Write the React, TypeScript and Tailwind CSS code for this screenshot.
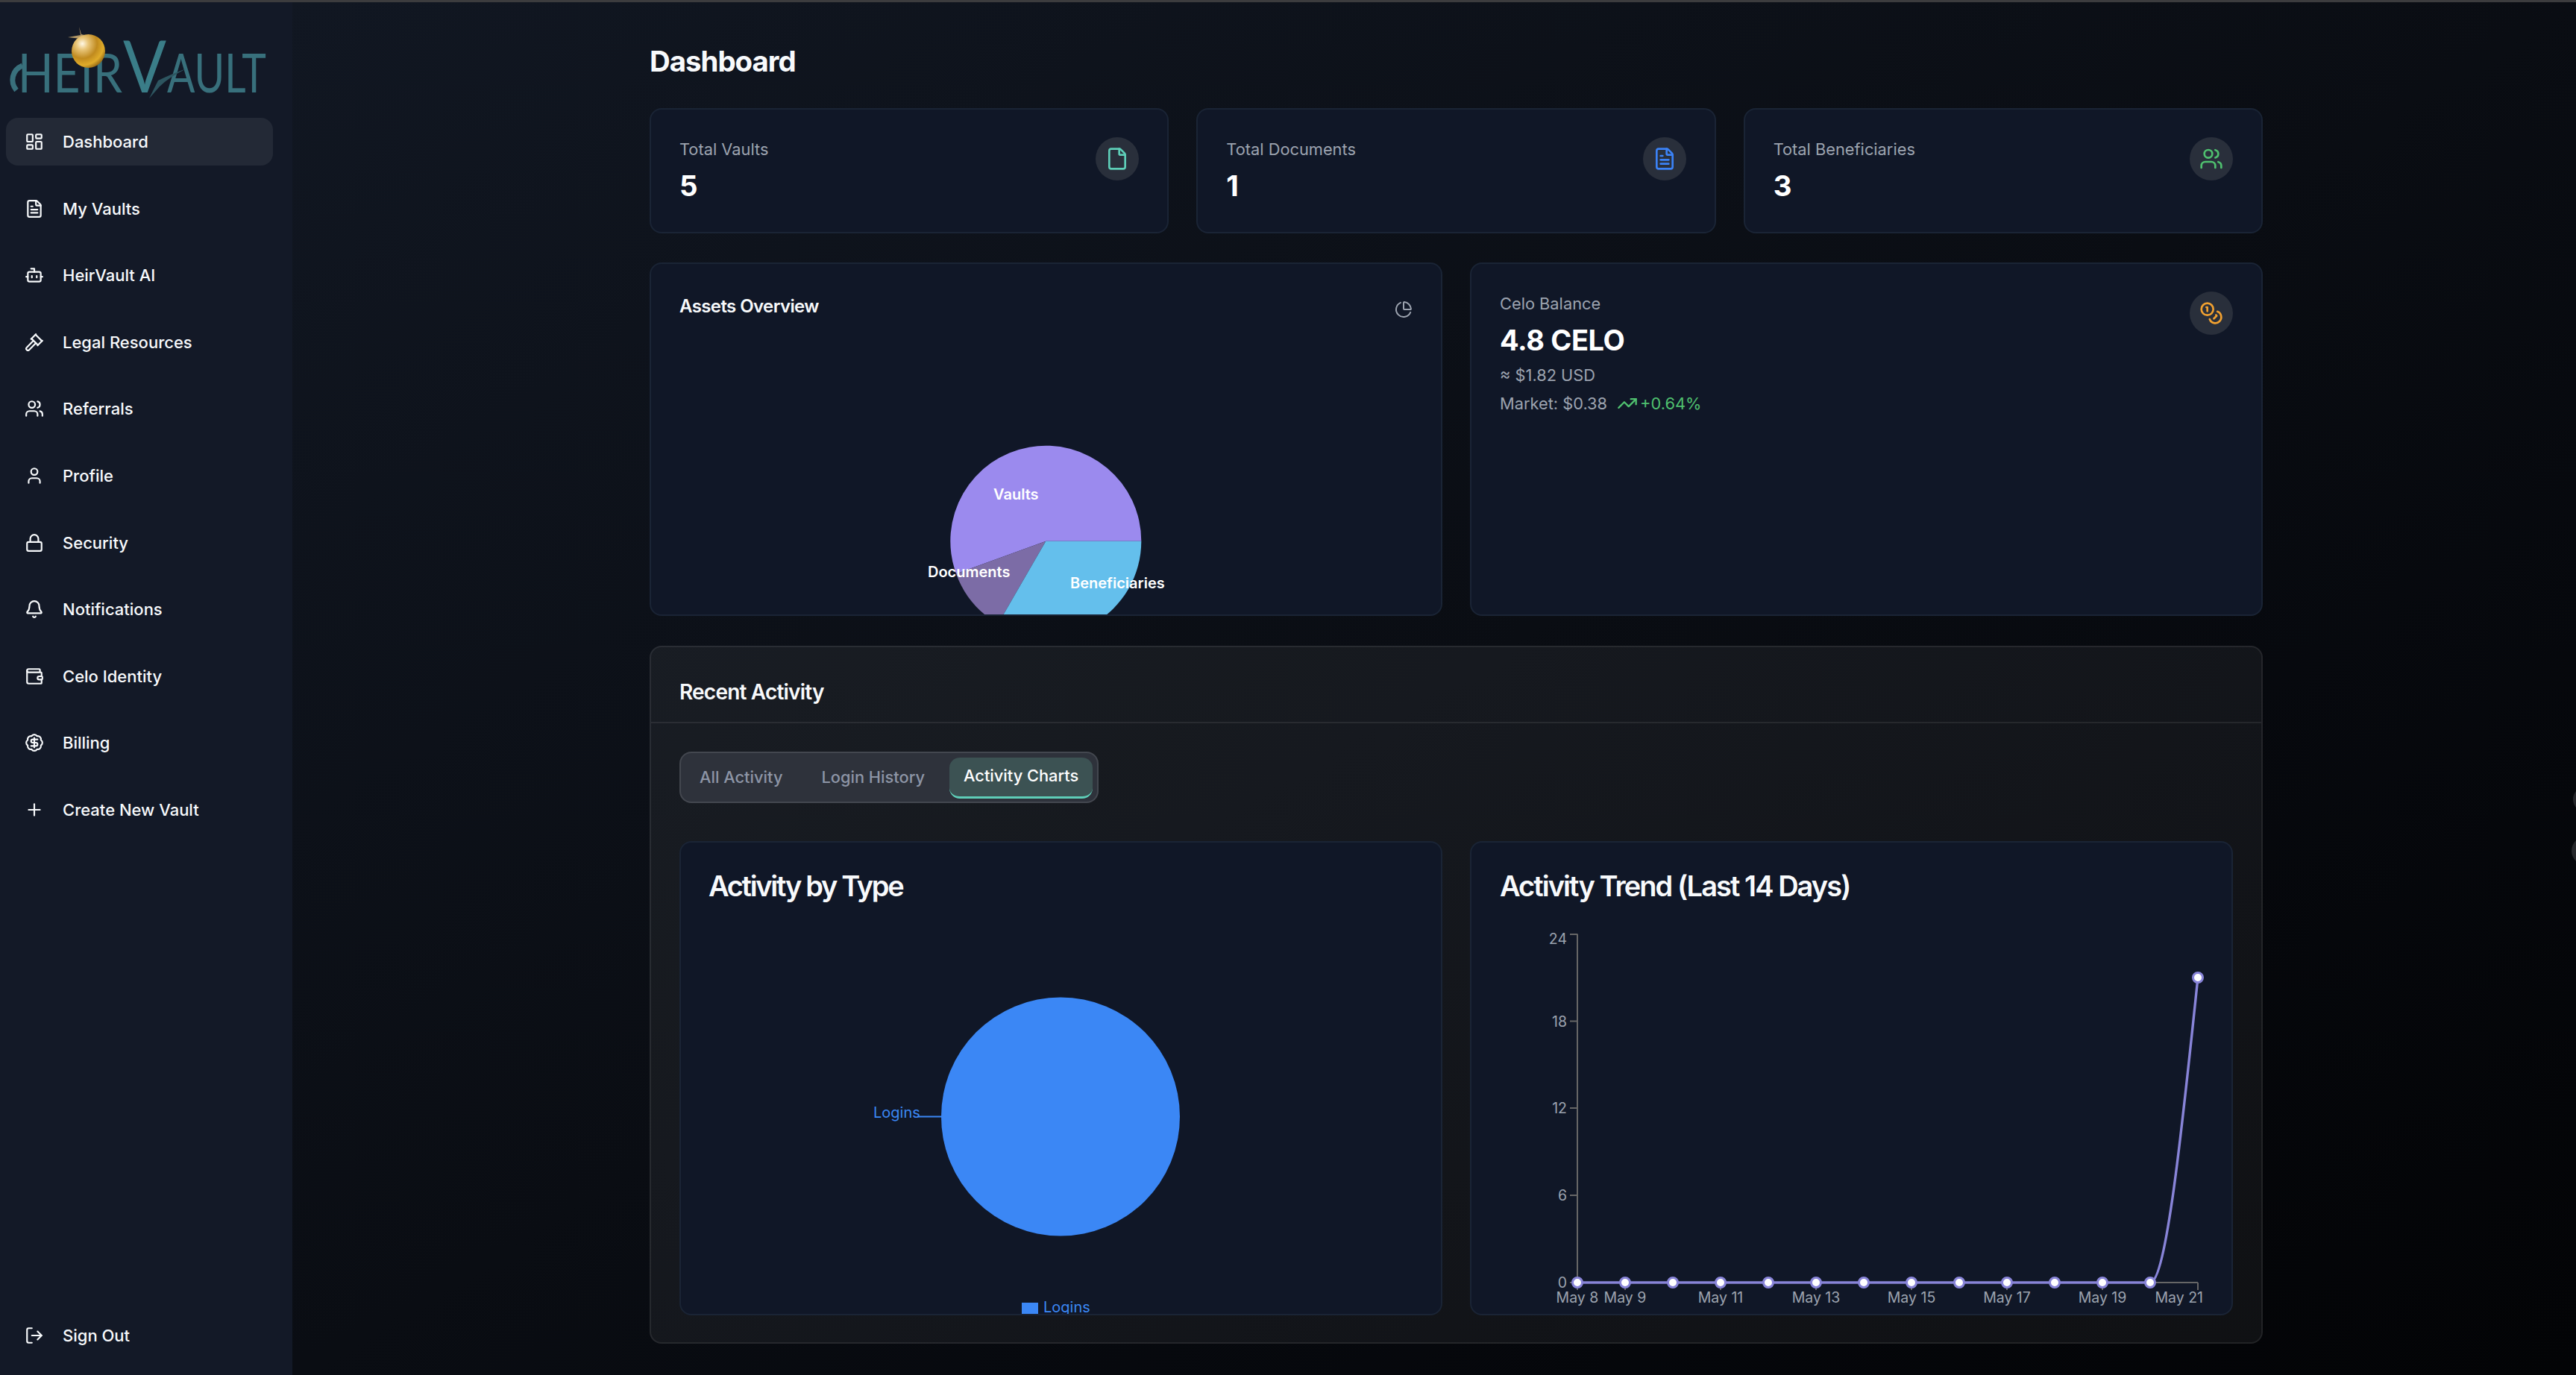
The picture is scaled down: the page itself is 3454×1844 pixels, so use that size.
import React from "react";
import {
  LayoutDashboard, FileText, Bot, Gavel, Users, User, Lock, Bell, Wallet, BadgeDollarSign, Plus, LogOut,
  File, Coins, PieChart, TrendingUp,
} from "lucide-react";

const nav = [
  { label: "Dashboard", Icon: LayoutDashboard, active: true },
  { label: "My Vaults", Icon: FileText },
  { label: "HeirVault AI", Icon: Bot },
  { label: "Legal Resources", Icon: Gavel },
  { label: "Referrals", Icon: Users },
  { label: "Profile", Icon: User },
  { label: "Security", Icon: Lock },
  { label: "Notifications", Icon: Bell },
  { label: "Celo Identity", Icon: Wallet },
  { label: "Billing", Icon: BadgeDollarSign },
  { label: "Create New Vault", Icon: Plus },
];

function Logo() {
  return (
    <svg width="380" height="155" viewBox="0 3 380 155" className="block shrink-0" role="img" aria-label="HeirVault">
      <defs>
        <radialGradient id="gold" cx="0.32" cy="0.28" r="0.8">
          <stop offset="0" stopColor="#fff8e6" />
          <stop offset="0.22" stopColor="#e9c67a" />
          <stop offset="0.55" stopColor="#c08a1e" />
          <stop offset="0.8" stopColor="#e0ac2a" />
          <stop offset="1" stopColor="#8a5e12" />
        </radialGradient>
      </defs>
      <path d="M30 88 C16 94 13 110 22 121" fill="none" stroke="#39707c" strokeWidth="7" />
      <text x="24" y="124" fontFamily="Lato, 'Liberation Sans', sans-serif" fontSize="72" fill="#38707c" textLength="140" lengthAdjust="spacingAndGlyphs">HEIR</text>
      <text x="165" y="124" fontFamily="Lato, 'Liberation Sans', sans-serif" fontSize="96" fill="#3a7d88" textLength="58" lengthAdjust="spacingAndGlyphs">V</text>
      <text x="224" y="124" fontFamily="Lato, 'Liberation Sans', sans-serif" fontSize="72" fill="#38707c" textLength="133" lengthAdjust="spacingAndGlyphs">AULT</text>
      <path d="M200 132 L212 108 Q228 100 250 92 Q226 104 214 116 Z" fill="#2d5560" />
      <path d="M106 36 L108 47 L91 50 L109 52 L118 48 L109 46 Z" fill="#d9b777" opacity="0.8" />
      <circle cx="118.500" cy="68.500" r="22.500" fill="url(#gold)" />
    </svg>
  );
}

function Sidebar() {
  return (
    <aside className="w-[392px] shrink-0 h-full bg-[#131927] flex flex-col items-start pb-[21px]">
      <Logo />
      <nav className="flex flex-col gap-[25.600px] pl-[8px] w-[366px]">
        {nav.map(({ label, Icon, active }) => (
          <div
            key={label}
            className={`h-[64px] rounded-[16px] flex items-center pl-[25px] gap-[25px] text-[22px] leading-[32px] font-medium text-[#f8fafc] ${active ? "bg-[#232936]" : ""}`}
          >
            <Icon size={26} strokeWidth={2} className="shrink-0" />
            <span>{label}</span>
          </div>
        ))}
      </nav>
      <div className="mt-auto h-[64px] pl-[33px] gap-[25px] flex items-center text-[22px] font-medium text-[#f8fafc]">
        <LogOut size={26} className="shrink-0" />
        <span>Sign Out</span>
      </div>
    </aside>
  );
}

function IconCircle({ children }: { children: React.ReactNode }) {
  return (
    <div className="w-[58px] h-[58px] rounded-full bg-[#292f3b] flex items-center justify-center shrink-0">{children}</div>
  );
}

function Stat({ label, value, icon }: { label: string; value: string; icon: React.ReactNode }) {
  return (
    <div className="h-[168px] rounded-[16px] border-2 border-[#1a2435] bg-[#101727] py-[37px] px-[38px] flex justify-between items-start">
      <div>
        <div className="text-[21.800px] leading-[32px] text-[#9ca3af]">{label}</div>
        <div className="mt-[9px] text-[38.400px] leading-[48px] font-bold text-white">{value}</div>
      </div>
      {icon}
    </div>
  );
}

function AssetsPie() {
  const cx = 1402.3, cy = 725.7, r = 128;
  const pt = (deg: number) => {
    const a = (deg * Math.PI) / 180;
    return `${cx + r * Math.cos(a)} ${cy - r * Math.sin(a)}`;
  };
  return (
    <svg viewBox="873 470 1059 354" width="1059" height="354" className="block" fontFamily="Inter, sans-serif">
      <path d={`M${cx} ${cy} L${pt(0)} A${r} ${r} 0 1 0 ${pt(200)} Z`} fill="#9b8aee" />
      <path d={`M${cx} ${cy} L${pt(200)} A${r} ${r} 0 0 0 ${pt(240)} Z`} fill="#7c6ca6" />
      <path d={`M${cx} ${cy} L${pt(240)} A${r} ${r} 0 0 0 ${pt(360)} Z`} fill="#64bfec" />
      <g fill="#ffffff" fontSize="20" fontWeight="600">
        <text x="1332" y="670">Vaults</text>
        <text x="1244" y="774">Documents</text>
        <text x="1435" y="789">Beneficiaries</text>
      </g>
    </svg>
  );
}

function TypePie() {
  return (
    <svg viewBox="913 1220 1019 542" width="1019" height="542" className="block" fontFamily="Inter, sans-serif">
      <circle cx="1422" cy="1497.500" r="160" fill="#3b87f5" />
      <path d="M1230 1497.500 H1263" stroke="#3b87f5" strokeWidth="2" />
      <text x="1171" y="1499" fontSize="20" fill="#3b87f5">Logins</text>
      <rect x="1370" y="1747" width="22" height="18" fill="#3b87f5" />
      <text x="1399" y="1760" fontSize="20" fill="#3b87f5">Logins</text>
    </svg>
  );
}

function TrendChart() {
  const xs = Array.from({ length: 14 }, (_, i) => 2115 + i * 64);
  const yTicks = [[24, 1253], [18, 1369.5], [12, 1486], [6, 1603], [0, 1720]] as const;
  const xLabels = [[0, "May 8"], [1, "May 9"], [3, "May 11"], [5, "May 13"], [7, "May 15"], [9, "May 17"], [11, "May 19"]] as const;
  return (
    <svg viewBox="1973 1220 1019 542" width="1019" height="542" className="block" fontFamily="Inter, sans-serif">
      <g stroke="#666666" strokeWidth="2" fill="none">
        <path d="M2115 1252.500 V1720 H2947" />
        {yTicks.map(([v, y]) => <path key={v} d={`M2105 ${y} H2115`} />)}
        {xLabels.map(([i]) => <path key={i} d={`M${xs[i]} 1720 V1730`} />)}
        <path d="M2947 1720 V1730" />
      </g>
      <g fill="#9ca3af" fontSize="19.500">
        {yTicks.map(([v, y]) => <text key={v} x="2101" y={v === 24 ? y + 13 : y + 7} textAnchor="end">{v}</text>)}
        {xLabels.map(([i, l]) => <text key={l} x={xs[i]} y="1747" textAnchor="middle">{l}</text>)}
        <text x="2954" y="1747" textAnchor="end">May 21</text>
      </g>
      <path d="M2115 1720 H2883 C2904.330 1720 2925.670 1515.500 2947 1311" fill="none" stroke="#8884d8" strokeWidth="3.400" />
      {xs.map((x, i) => (
        <circle key={x} cx={x} cy={i === 13 ? 1311 : 1720} r="6.500" fill="#ffffff" stroke="#8884d8" strokeWidth="3" />
      ))}
    </svg>
  );
}

export default function App() {
  return (
    <div className="relative w-[3454px] h-[1844px] overflow-hidden flex flex-col bg-[#0b0e14] font-['Inter',sans-serif]">
      <div className="h-[3px] shrink-0 bg-[#3c3c3e]" />
      <div className="flex-1 min-h-0 flex">
        <Sidebar />
        <main className="flex-1 h-full pl-[479px] pr-[420px] pt-[55px] bg-gradient-to-br from-[#111722] via-[#0a0d13] to-[#030406]">
          <h1 className="text-[38.400px] leading-[48px] font-bold tracking-[-1px] text-[#f8fafc]">Dashboard</h1>
          <div className="mt-[39px] grid grid-cols-3 gap-[37px]">
            <Stat label="Total Vaults" value="5" icon={<IconCircle><File size={32} className="text-[#5eceb8]" /></IconCircle>} />
            <Stat label="Total Documents" value="1" icon={<IconCircle><FileText size={32} className="text-[#3b82f6]" /></IconCircle>} />
            <Stat label="Total Beneficiaries" value="3" icon={<IconCircle><Users size={32} className="text-[#4fc06f]" /></IconCircle>} />
          </div>
          <div className="mt-[39px] grid grid-cols-2 gap-[37px]">
            <div className="h-[474px] rounded-[16px] border-2 border-[#1a2435] bg-[#101727] overflow-hidden">
              <div className="h-[116px] pl-[38px] pr-[38px] pt-[41px] flex justify-between items-start">
                <h3 className="text-[24px] leading-[32px] font-semibold tracking-[-0.6px] text-[#f8fafc]">Assets Overview</h3>
                <PieChart size={24} className="text-[#9ca3af] mt-[8px]" />
              </div>
              <AssetsPie />
            </div>
            <div className="h-[474px] rounded-[16px] border-2 border-[#1a2435] bg-[#101727] py-[37px] px-[38px] flex justify-between items-start">
              <div>
                <div className="text-[21.800px] leading-[32px] text-[#9ca3af]">Celo Balance</div>
                <div className="mt-[9px] text-[38px] leading-[48px] font-bold tracking-[-0.4px] text-white">4.8 CELO</div>
                <div className="mt-[7px] text-[21.800px] leading-[32px] text-[#9ca3af]">≈ $1.82 USD</div>
                <div className="mt-[6px] flex items-center text-[21.800px] leading-[32px] text-[#9ca3af]">
                  <span>Market: $0.38</span>
                  <TrendingUp size={28} className="ml-[13px] mr-[3px] text-[#4fc06f]" />
                  <span className="text-[#4fc06f]">+0.64%</span>
                </div>
              </div>
              <IconCircle><Coins size={32} className="text-[#f0a030]" /></IconCircle>
            </div>
          </div>
          <section className="mt-[40px] h-[936px] rounded-[16px] border-2 border-white/[0.08] bg-white/5 overflow-hidden">
            <div className="h-[102px] border-b-2 border-white/[0.08] pl-[38px] pt-[42px]">
              <h3 className="text-[28px] leading-[36px] font-semibold tracking-[-0.8px] text-[#f8fafc]">Recent Activity</h3>
            </div>
            <div className="px-[38px] pt-[38px]">
              <div className="inline-flex h-[69px] items-start gap-[14px] rounded-[16px] border-2 border-white/10 bg-[#2e323b] p-[6px]">
                <div className="h-[53px] px-[19px] flex items-center text-[21.800px] font-medium text-[#8d95a6]">All Activity</div>
                <div className="h-[53px] px-[19px] flex items-center text-[21.800px] font-medium text-[#8d95a6]">Login History</div>
                <div className="h-[55px] px-[19px] pb-[3px] flex items-center rounded-[14px] border-b-[3px] border-[#5eceb8] bg-[#3c5253] text-[21.800px] font-medium text-white">Activity Charts</div>
              </div>
              <div className="mt-[51px] grid grid-cols-2 gap-[37px]">
                <div className="h-[636px] rounded-[16px] border-2 border-[#1a2435] bg-[#101727] overflow-hidden">
                  <div className="h-[90px] pl-[37px] pt-[34px]"><h3 className="text-[38px] leading-[48px] font-semibold tracking-[-2.300px] text-[#f8fafc]">Activity by Type</h3></div>
                  <TypePie />
                </div>
                <div className="h-[636px] rounded-[16px] border-2 border-[#1a2435] bg-[#101727] overflow-hidden">
                  <div className="h-[90px] pl-[38px] pt-[34px]"><h3 className="text-[38px] leading-[48px] font-semibold tracking-[-1.950px] text-[#f8fafc]">Activity Trend (Last 14 Days)</h3></div>
                  <TrendChart />
                </div>
              </div>
            </div>
          </section>
        </main>
      </div>
      <div className="absolute left-[3450px] top-[1055px] w-[40px] h-[34px] rounded-full bg-[#26272b]" />
      <div className="absolute left-[3448px] top-[1122px] w-[40px] h-[38px] rounded-full bg-[#26272b]" />
    </div>
  );
}
